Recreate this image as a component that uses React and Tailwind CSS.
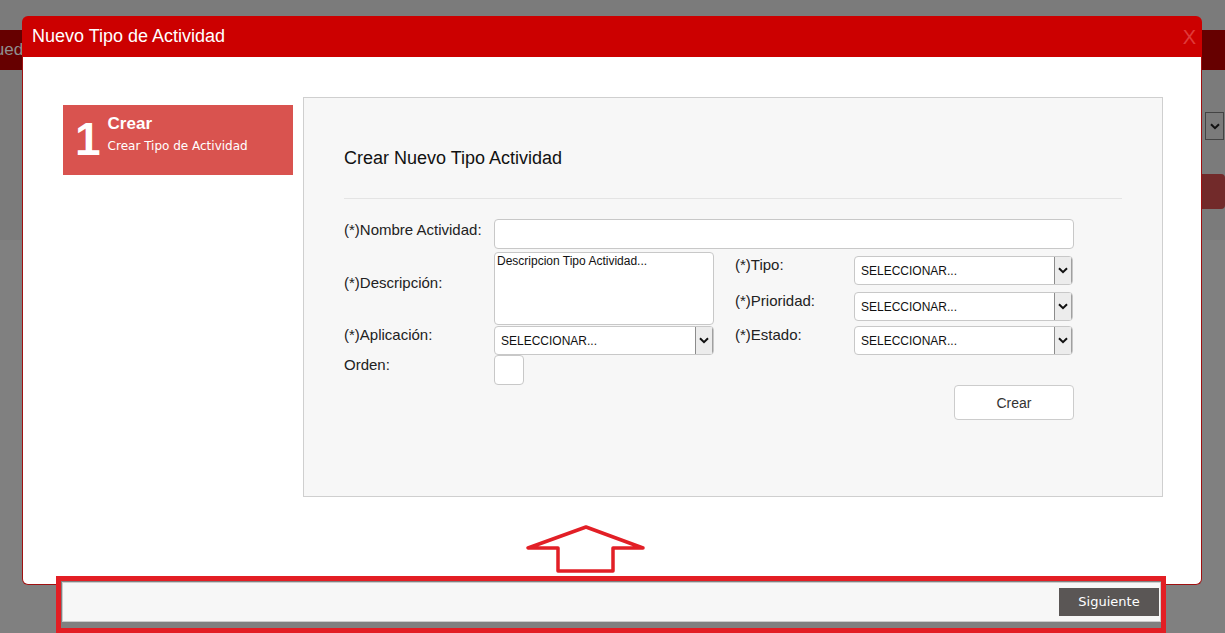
import React from "react";

const Chevron = () => (
  <svg width="10" height="7" viewBox="0 0 10 7" fill="none">
    <path d="M1 1.2 L5 5.2 L9 1.2" stroke="#111" strokeWidth="2" />
  </svg>
);

const Select = ({ w }) => (
  <div className={`${w} h-[29px] flex bg-white border border-[#c8c8c8] rounded-[4px] overflow-hidden`}>
    <div className="flex-1 flex items-center pl-[6px] text-[12px] text-[#111]">SELECCIONAR...</div>
    <div className="w-[18px] h-full flex items-center justify-center bg-[#ececec] border-l border-[#8c8c8c] border-r border-r-[#a0a0a0]">
      <Chevron />
    </div>
  </div>
);

export default function App() {
  return (
    <div className="relative w-[1225px] h-[633px] overflow-hidden bg-[#808080] font-['Liberation_Sans',Arial,sans-serif]">
      {/* background page */}
      <div className="h-[240px] bg-[#7b7b7b] flex flex-col">
        <div className="h-[30px]" />
        <div className="h-[40px] bg-[#660000] flex items-center overflow-hidden">
          <span className="ml-[-44px] text-[17px] text-[#8f8f8f] whitespace-nowrap">Búsqueda</span>
        </div>
        <div className="h-[42px]" />
        <div className="flex justify-end pr-[1px]">
          <div className="w-[19px] h-[28px] border border-[#444] flex items-center justify-center">
            <Chevron />
          </div>
        </div>
        <div className="h-[34px]" />
        <div className="flex justify-end">
          <div className="w-[25px] h-[35px] bg-[#722a2a] rounded-r-[4px]" />
        </div>
      </div>

      {/* modal */}
      <div className="absolute left-[22px] top-[16px] w-[1180px]">
        <div className="h-[41px] bg-[#cc0000] rounded-t-[6px] flex items-center justify-between pl-[10px] pr-[6px]">
          <span className="text-white text-[18px]">Nuevo Tipo de Actividad</span>
          <span className="text-[#e03a3a] text-[20px]">X</span>
        </div>
        <div className="h-[528px] bg-white border border-t-0 border-[#a01010] rounded-b-[6px] flex items-start pl-[40px] pt-[40px]">
          {/* step */}
          <div className="mt-[8px] w-[230px] h-[70px] bg-[#d9534f] flex items-start pl-[12px] pt-[9px] text-white">
            <span className="text-[46px] font-bold leading-none mt-[2px]">1</span>
            <div className="ml-[7px] flex flex-col">
              <span className="text-[17px] font-bold leading-[20px]">Crear</span>
              <span className="text-[12px] font-['DejaVu_Sans',Verdana,sans-serif] leading-[16px] mt-[4px]">Crear Tipo de Actividad</span>
            </div>
          </div>

          {/* form panel */}
          <div className="ml-[10px] w-[860px] h-[400px] bg-[#f7f7f7] border border-[#cfcfcf] pl-[40px] pr-[40px] pt-[50px] text-[#222]">
            <div className="text-[18px] leading-[20px] text-[#111]">Crear Nuevo Tipo Actividad</div>
            <div className="mt-[30px] border-t border-[#e4e4e4]" />

            <div className="mt-[20px] w-[730px] text-[15px] leading-[18px]">
              {/* row 1 */}
              <div className="flex items-start">
                <div className="w-[150px] mt-[2px]">(*)Nombre Actividad:</div>
                <div className="w-[580px] h-[30px] bg-white border border-[#c8c8c8] rounded-[4px]" />
              </div>

              {/* row 2 */}
              <div className="flex items-start mt-[3px]">
                <div className="w-[370px] flex flex-col">
                  <div className="flex items-start">
                    <div className="w-[150px] mt-[22px]">(*)Descripción:</div>
                    <div className="w-[220px] h-[73px] bg-white border border-[#c8c8c8] rounded-[4px] pl-[2px] pt-[1px] text-[12px] leading-[14px] text-[#111]">
                      Descripcion Tipo Actividad...
                    </div>
                  </div>
                  <div className="flex items-start">
                    <div className="w-[150px] mt-[1px]">(*)Aplicación:</div>
                    <div className="mt-[1px]"><Select w="w-[220px]" /></div>
                  </div>
                  <div className="flex items-start">
                    <div className="w-[150px] mt-[1px]">Orden:</div>
                    <div className="w-[30px] h-[30px] bg-white border border-[#c8c8c8] rounded-[4px]" />
                  </div>
                </div>

                <div className="ml-[21px] flex flex-col">
                  <div className="flex items-start">
                    <div className="w-[119px] mt-[4px]">(*)Tipo:</div>
                    <div className="mt-[4px]"><Select w="w-[219px]" /></div>
                  </div>
                  <div className="flex items-start">
                    <div className="w-[119px] mt-[7px]">(*)Prioridad:</div>
                    <div className="mt-[7px]"><Select w="w-[219px]" /></div>
                  </div>
                  <div className="flex items-start">
                    <div className="w-[119px] mt-[5px]">(*)Estado:</div>
                    <div className="mt-[5px]"><Select w="w-[219px]" /></div>
                  </div>
                </div>
              </div>

              <div className="flex justify-end">
                <div className="w-[120px] h-[35px] bg-white border border-[#cccccc] rounded-[4px] flex items-center justify-center text-[14px] text-[#333]">
                  Crear
                </div>
              </div>
            </div>
          </div>
        </div>
      </div>

      {/* annotation arrow */}
      <svg className="absolute left-[520px] top-[520px]" width="130" height="56" viewBox="0 0 130 56">
        <polygon
          points="66,7 8,28 38,28 38,51 93,51 93,28 123,28"
          fill="white"
          stroke="#e21f26"
          strokeWidth="3.5"
          strokeLinejoin="round"
        />
      </svg>

      {/* annotation box with footer */}
      <div className="absolute left-[56px] top-[576px] w-[1110px] h-[57px] border-[5px] border-[#e31e24] bg-[#808080]">
        <div className="ml-[1px] mt-[1px] h-[40px] bg-[#f7f7f7] border border-[#cccccc] flex justify-end items-start pt-[5px] pr-[1px]">
          <div className="w-[100px] h-[28px] bg-[#5a5655] flex items-center justify-center text-white text-[13px] font-['DejaVu_Sans',Verdana,sans-serif]">
            Siguiente
          </div>
        </div>
      </div>
    </div>
  );
}
